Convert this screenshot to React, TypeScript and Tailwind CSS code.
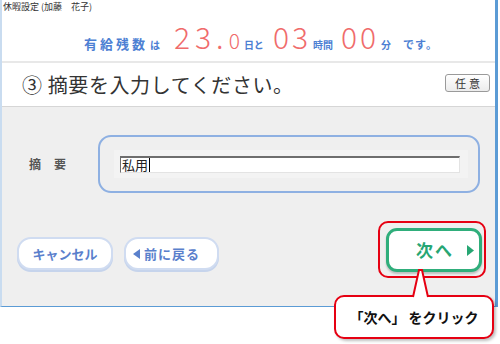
import React from "react";

export default function App() {
  return (
    <div className="relative w-[500px] h-[344px] bg-white overflow-hidden font-['Noto_Sans_CJK_JP',sans-serif]">
      <div className="w-[498px] h-[307px] border-l-2 border-l-[#c9dcf0] border-r-[3px] border-r-[#5b9bd5] border-b border-b-[#5b9bd5] flex flex-col">
        {/* title */}
        <div className="h-[17px] pl-[1px] pt-[1px] text-[9px] leading-[12px] text-[#333]">休暇設定 (加藤　花子)</div>
        {/* header */}
        <div className="h-[44px] flex items-baseline pl-[82px] pt-[4px] text-[#4d7fd3] leading-none">
          <span className="text-[13px] font-bold tracking-[3px]">有給残数</span>
          <span className="text-[10px] font-bold ml-[2px]">は</span>
          <span className="ml-[14px] text-[30px] font-light text-[#f06b6b] tracking-[5px]">23.<span className="text-[21px] tracking-[3px]">0</span></span>
          <span className="text-[10px] font-bold ml-[1px]">日と</span>
          <span className="ml-[9px] text-[30px] font-light text-[#f06b6b] tracking-[3px]">03</span>
          <span className="text-[10px] font-bold ml-[2px]">時間</span>
          <span className="ml-[8px] text-[30px] font-light text-[#f06b6b] tracking-[3px]">00</span>
          <span className="text-[10px] font-bold ml-[2px]">分</span>
          <span className="text-[11px] font-bold ml-[12px] tracking-[1px]">です。</span>
        </div>
        <div className="h-[2px] bg-[#e8e8e8]" />
        {/* heading */}
        <div className="h-[43px] flex items-center pl-[20px] pr-[5px]">
          <span className="text-[20px] text-[#333] leading-none tracking-[0.6px]">③ 摘要を入力してください。</span>
          <span className="ml-auto mb-[3px] w-[45px] h-[18px] rounded-[3px] border border-[#9a9a9a] bg-gradient-to-b from-white to-[#ececec] flex items-center justify-center text-[11px] text-[#333] tracking-[3px] pl-[3px]">任意</span>
        </div>
        <div className="h-[1px] bg-[#d6d6d6]" />
        {/* body */}
        <div className="flex-1 bg-[#efefef] flex flex-col pt-[28px]">
          <div className="flex items-center h-[58px]">
            <div className="w-[96px] pl-[27px] text-[12px] font-bold text-[#555] tracking-[13px]">摘要</div>
            <div className="w-[382px] h-[58px] rounded-[13px] border-2 border-[#8eb0e2] flex items-center pl-[14px]">
              <div className="w-[354px] h-[28px] bg-[#f3f3f3] flex items-center pl-[6px]">
                <div className="w-[340px] h-[17px] bg-white border-t-2 border-l border-t-[#6e6e6e] border-l-[#6e6e6e] border-b border-r border-b-[#e3e3e3] border-r-[#e3e3e3] flex items-center text-[13px] leading-none text-[#222] pl-[1px]">
                  私用<span className="inline-block w-[1px] h-[14px] bg-black ml-[1px]" />
                </div>
              </div>
            </div>
          </div>
          <div className="flex mt-[35px]">
            <div className="ml-[15px] mt-[9px] w-[96px] h-[33px] rounded-[14px] border-2 border-[#d0dcf1] shadow-[0_2px_0_#c6d4ec] bg-white flex items-center justify-center text-[13px] font-bold text-[#5a80cc]">キャンセル</div>
            <div className="ml-[11px] mt-[9px] w-[95px] h-[33px] rounded-[14px] border-2 border-[#d0dcf1] shadow-[0_2px_0_#c6d4ec] bg-white flex items-center pl-[7px] text-[13px] font-bold text-[#5a80cc]">
              <svg width="7" height="10" viewBox="0 0 7 10" className="mr-[4px]"><polygon points="7,0 7,10 0,5" fill="#5a80cc" /></svg>
              <span className="tracking-[1px]">前に戻る</span>
            </div>
            <div className="ml-auto mr-[13px] w-[96px] h-[44px] rounded-[11px] border-[3px] border-[#2fae7b] shadow-[0_2px_2px_rgba(0,0,0,0.2)] bg-white flex items-center pl-[27px] text-[17px] font-bold text-[#27a673]">
              <span className="tracking-[2px]">次へ</span>
              <svg width="7" height="11" viewBox="0 0 7 11" className="ml-[13px]"><polygon points="0,0 7,5.5 0,11" fill="#27a673" /></svg>
            </div>
          </div>
        </div>
      </div>
      {/* red highlight */}
      <div className="absolute left-[378px] top-[221px] w-[108px] h-[57px] rounded-[10px] border-2 border-[#e60012]" />
      {/* bubble */}
      <div className="absolute left-[334px] top-[295px] w-[160px] h-[44px] rounded-[10px] border-2 border-[#e60012] bg-white shadow-[2px_2px_3px_rgba(0,0,0,0.25)] flex items-center justify-center text-[14px] font-bold text-[#111]">
        「次へ」 をクリック
      </div>
      <svg className="absolute left-[410px] top-[269px]" width="22" height="29" viewBox="0 0 22 29">
        <polygon points="9,1 12,1 18,29 3,29" fill="white" />
        <polyline points="3,28 9,1 12,1 18,28" fill="none" stroke="#e60012" strokeWidth="2" />
      </svg>
    </div>
  );
}
